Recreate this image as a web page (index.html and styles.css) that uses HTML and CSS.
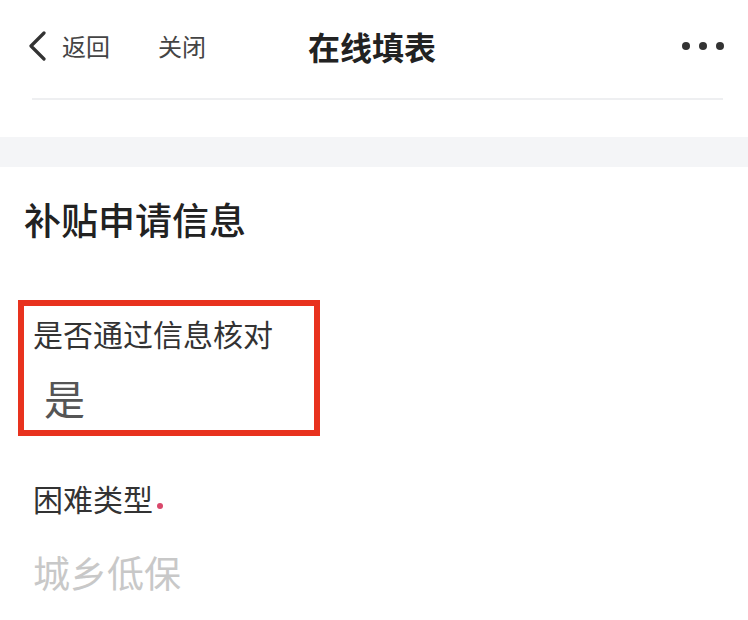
FILE: index.html
```html
<!DOCTYPE html>
<html lang="zh-CN">
<head>
<meta charset="utf-8">
<title>在线填表</title>
<link rel="stylesheet" href="styles.css">
</head>
<body>
<header class="nav">
  <div class="nav-left">
    <svg class="back-icon" width="20" height="30" viewBox="0 0 20 30"><path d="M17 2 L4 15 L17 28" fill="none" stroke="#333" stroke-width="3.2" stroke-linecap="round" stroke-linejoin="round"/></svg>
    <span class="nav-link">返回</span>
    <span class="nav-link close">关闭</span>
  </div>
  <div class="nav-title">在线填表</div>
  <div class="nav-more"><i></i><i></i><i></i></div>
</header>
<div class="divider"></div>
<div class="band"></div>
<main class="form">
  <h2 class="section-title">补贴申请信息</h2>
  <div class="field highlight">
    <div class="label">是否通过信息核对</div>
    <div class="value">是</div>
  </div>
  <div class="field plain">
    <div class="label">困难类型<span class="req"></span></div>
    <div class="value placeholder">城乡低保</div>
  </div>
</main>
</body>
</html>
```
FILE: styles.css
```css
* { box-sizing: border-box; }
html, body { margin: 0; padding: 0; background: #fff; }
body {
  width: 748px;
  font-family: "Noto Sans CJK SC", "Noto Sans", sans-serif;
  color: #333;
}
.nav {
  height: 92px;
  display: flex;
  align-items: center;
  padding: 0 24px 0 27px;
}
.nav-left {
  display: flex;
  align-items: center;
  width: 281px;
}
.back-icon { display: block; margin-right: 15px; }
.nav-link {
  font-size: 24px;
  color: #444;
  line-height: 1;
}
.nav-link.close { margin-left: 48px; }
.nav-title {
  font-size: 32px;
  font-weight: 700;
  color: #222;
  line-height: 1;
  flex: 1;
}
.nav-more {
  display: flex;
  gap: 9px;
  align-items: center;
}
.nav-more i {
  display: block;
  width: 8px;
  height: 8px;
  border-radius: 50%;
  background: #333;
}
.divider {
  height: 2px;
  background: #eeeff1;
  margin: 6px 25px 0 32px;
}
.band {
  height: 30px;
  background: #f4f5f7;
  margin-top: 37px;
}
.form { padding: 0 0 0 18px; }
.section-title {
  margin: 30px 0 0 6px;
  font-size: 37px;
  font-weight: 500;
  color: #222;
  line-height: 1.2;
}
.field { padding-left: 15px; }
.field.highlight {
  margin-top: 59px;
  width: 302px;
  height: 136px;
  border: 6px solid #e8321e;
  padding: 9px 0 0 9px;
}
.label {
  font-size: 30px;
  color: #333;
  line-height: 1.2;
  display: flex;
  align-items: flex-end;
}
.value {
  font-size: 41px;
  color: #555;
  line-height: 1.2;
  margin-top: 22px;
  padding-left: 11px;
}
.field.plain { margin-top: 44px; }
.req {
  display: block;
  width: 6px;
  height: 6px;
  border-radius: 50%;
  background: #d9486b;
  margin: 0 0 7px 4px;
}
.value.placeholder {
  font-size: 37px;
  color: #c8c8c8;
  padding-left: 0;
  margin-top: 34px;
}
```
